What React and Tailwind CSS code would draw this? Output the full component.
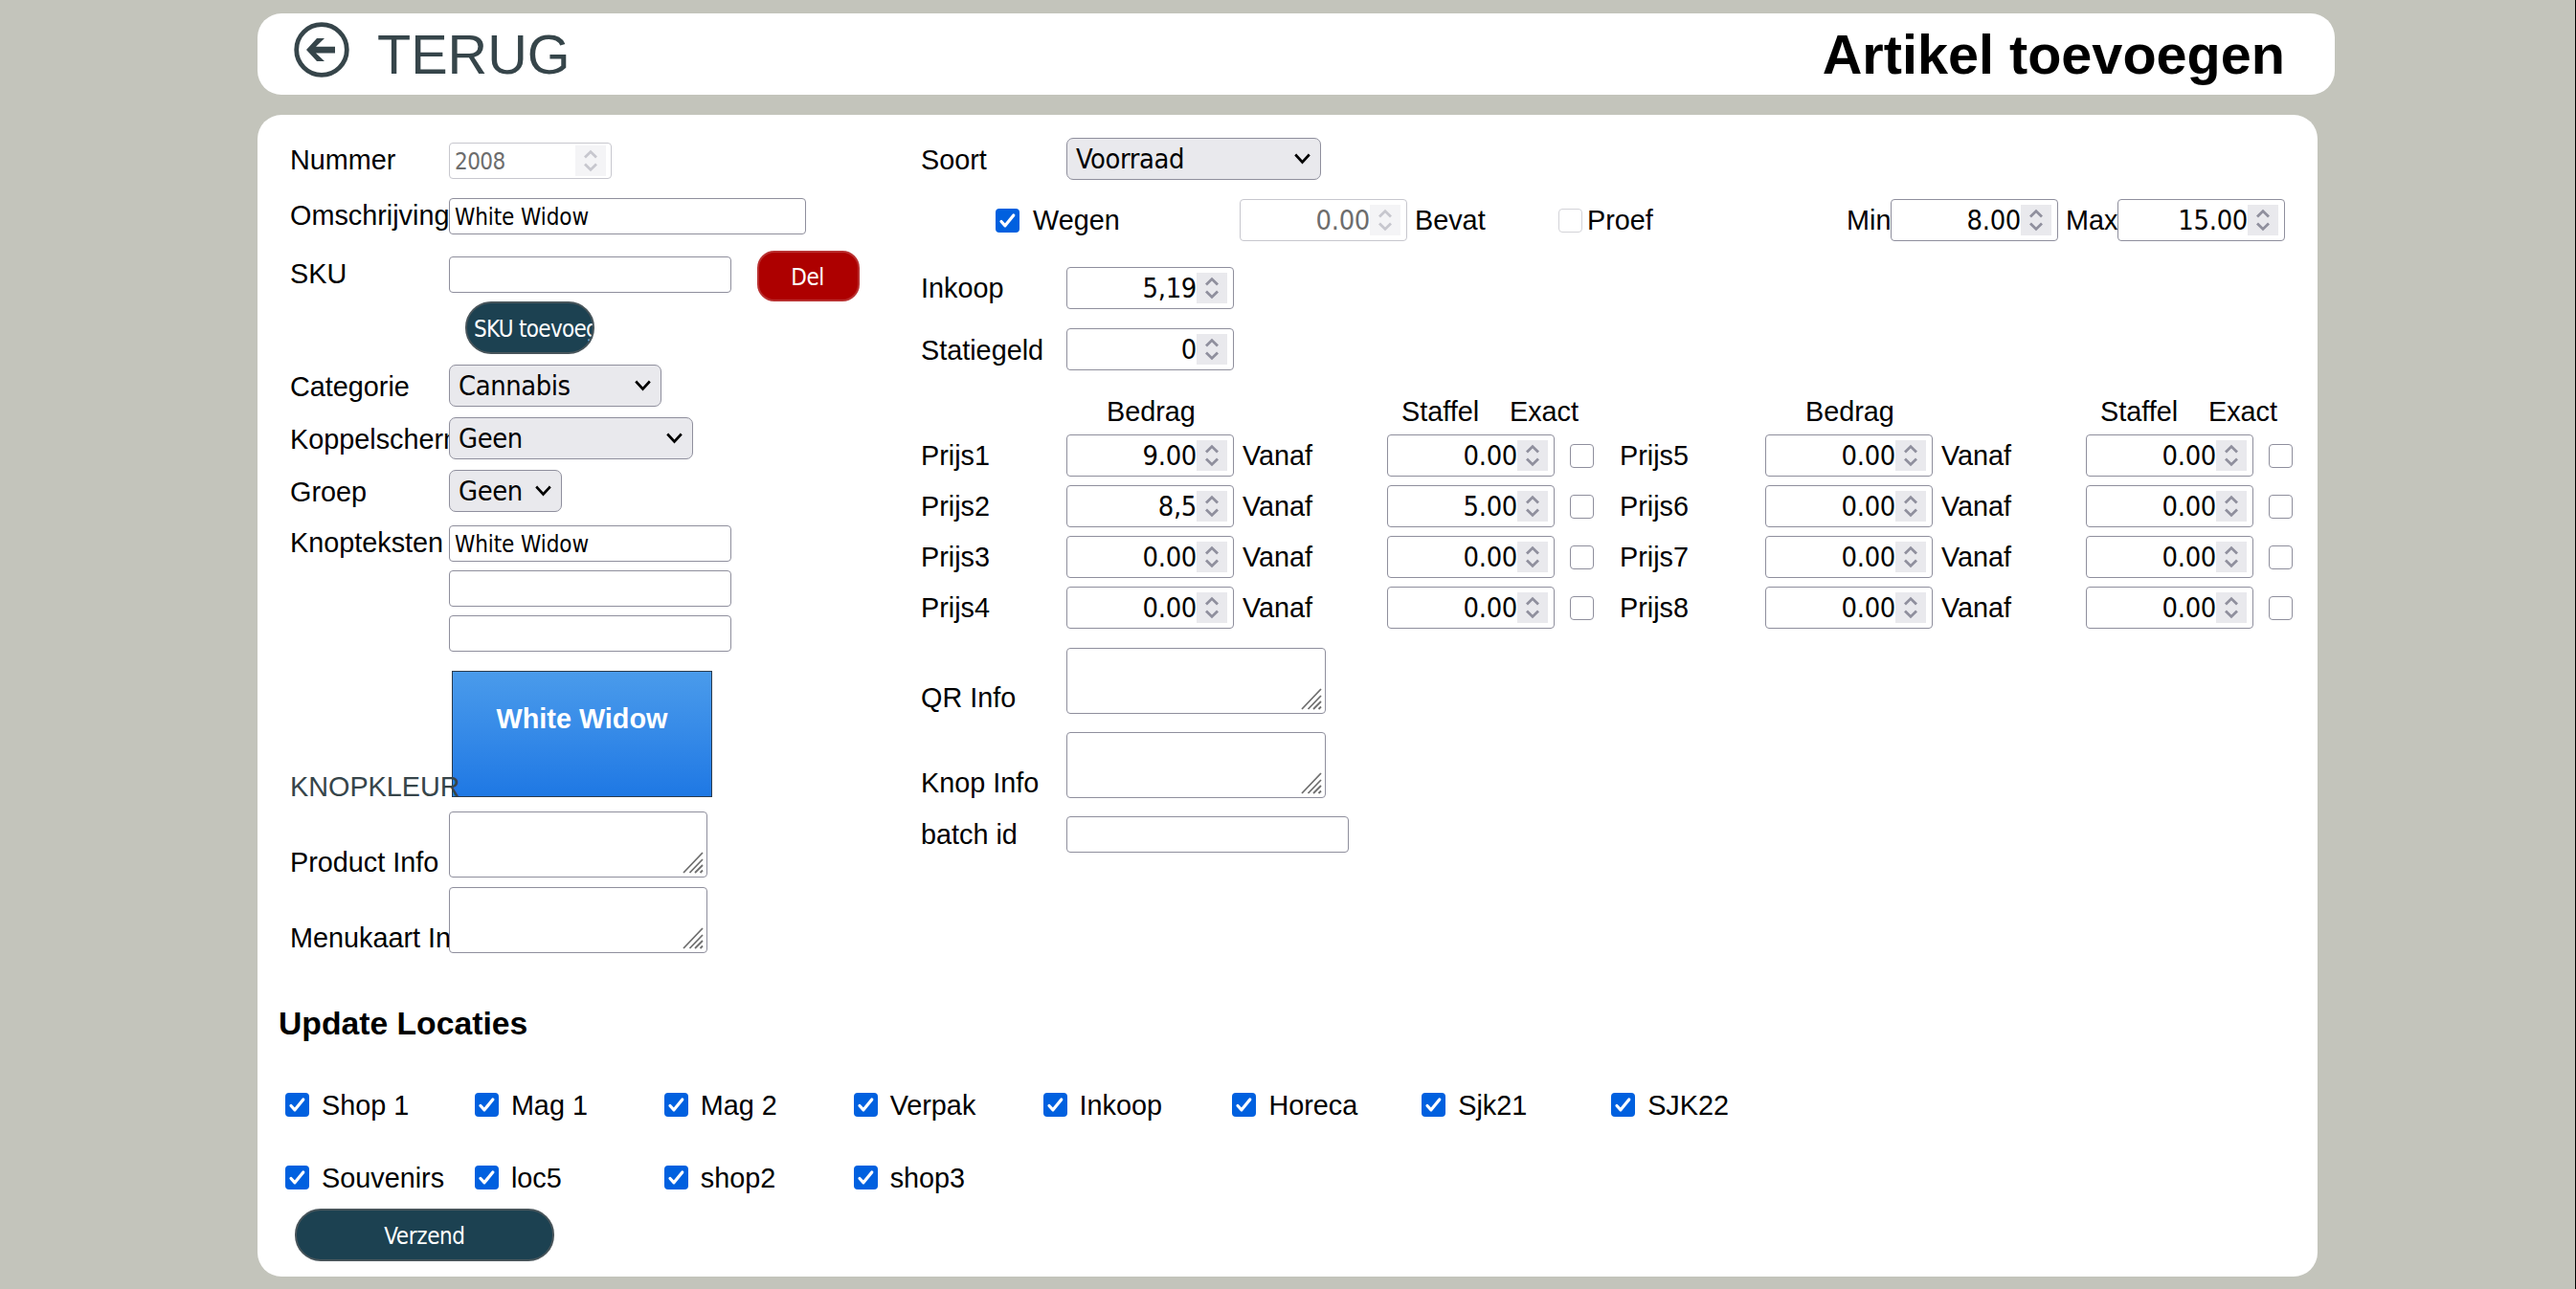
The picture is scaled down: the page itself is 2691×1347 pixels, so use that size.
import { useState } from 'react'

const labelClass = 'shrink-0 whitespace-nowrap'

function Spinner({ disabled }) {
  return (
    <span className={`flex h-8 w-8 shrink-0 items-center justify-center ${disabled ? 'bg-[#f4f4f6]' : 'bg-[#e9e9ed]'}`}>
      <svg width="14" height="24" viewBox="0 0 14 24" fill="none" stroke={disabled ? '#c7c7ce' : '#8f8f9d'} strokeWidth="2.8">
        <path d="M1 8.4 L7 2.6 L13 8.4" />
        <path d="M1 15.6 L7 21.4 L13 15.6" />
      </svg>
    </span>
  )
}

function NumberInput({ value, disabled }) {
  return (
    <div className={`flex h-11 w-[175px] shrink-0 items-center rounded-[4px] border-[1.5px] bg-white pr-[6px] ${disabled ? 'border-[#c7c7ce]' : 'border-[#8f8f9d]'}`}>
      <input
        className={`w-full min-w-0 text-right font-['DejaVu_Sans_Condensed','DejaVu_Sans',sans-serif] text-[28.8px] leading-9 tracking-[-0.3px] outline-none ${disabled ? 'text-[#6d6d6d]' : 'text-black'}`}
        defaultValue={value}
        disabled={disabled}
      />
      <Spinner disabled={disabled} />
    </div>
  )
}

function TextInput({ value = '', width = 'w-[295px]' }) {
  return (
    <input
      className={`h-[38px] shrink-0 rounded-[4px] border-[1.5px] border-[#8f8f9d] bg-white px-[5px] pt-[2px] font-['DejaVu_Sans_Condensed','DejaVu_Sans',sans-serif] text-[24px] tracking-[-0.1px] outline-none ${width}`}
      defaultValue={value}
    />
  )
}

function SelectBox({ value, width }) {
  return (
    <button className={`flex h-11 shrink-0 items-center justify-between rounded-[7px] border-[1.5px] border-[#8f8f9d] bg-[#e9e9ed] pr-[10px] pl-[9px] font-['DejaVu_Sans_Condensed','DejaVu_Sans',sans-serif] text-[28.8px] leading-9 tracking-[-0.4px] ${width}`}>
      <span>{value}</span>
      <svg width="17" height="12" viewBox="0 0 17 12" fill="none" stroke="#000" strokeWidth="2.6">
        <path d="M1.2 1.5 L8.5 9.5 L15.8 1.5" />
      </svg>
    </button>
  )
}

function TextArea({ width }) {
  return (
    <div className={`flex h-[69px] shrink-0 items-end justify-end rounded-[4px] border-[1.5px] border-[#8f8f9d] bg-white pr-[3px] pb-[3px] ${width}`}>
      <svg width="22" height="23" viewBox="0 0 22 23" fill="none" stroke="#6f6f6f" strokeWidth="1.8">
        <path d="M1 22 L21 1 M7.5 22 L21 8 M13 22 L21 14 M18.5 22 L21 19.5" />
      </svg>
    </div>
  )
}

function Checkbox({ defaultChecked = false, disabled }) {
  const [checked, setChecked] = useState(defaultChecked)
  return (
    <button
      className={`flex h-[25px] w-[25px] shrink-0 items-center justify-center rounded-[4px] ${checked ? 'bg-[#0060df]' : disabled ? 'border-[1.5px] border-[#d3d3d8] bg-white' : 'border-[1.5px] border-[#8f8f9d] bg-white'}`}
      onClick={() => !disabled && setChecked(!checked)}
    >
      {checked && (
        <svg width="19" height="19" viewBox="0 0 19 19" fill="none" stroke="#fff" strokeWidth="3.2" strokeLinecap="round" strokeLinejoin="round">
          <path d="M3 10.5 L7 14.8 L15.8 4" />
        </svg>
      )}
    </button>
  )
}

const prices = [
  ['9.00', '0.00'],
  ['8,5', '5.00'],
  ['0.00', '0.00'],
  ['0.00', '0.00'],
  ['0.00', '0.00'],
  ['0.00', '0.00'],
  ['0.00', '0.00'],
  ['0.00', '0.00'],
]

const locations = ['Shop 1', 'Mag 1', 'Mag 2', 'Verpak', 'Inkoop', 'Horeca', 'Sjk21', 'SJK22', 'Souvenirs', 'loc5', 'shop2', 'shop3']

function PriceTable({ start }) {
  return (
    <div className="w-[730px] shrink-0">
      <div className="flex h-9 items-center">
        <span className="ml-[194px] w-[308px]">Bedrag</span>
        <span className="w-[113px]">Staffel</span>
        <span>Exact</span>
      </div>
      <div className="mt-[6px] flex flex-col gap-[9px]">
        {prices.slice(start, start + 4).map(([bedrag, staffel], i) => (
          <div key={i} className="flex h-11 items-center">
            <span className="w-[152px]">Prijs{start + i + 1}</span>
            <NumberInput value={bedrag} />
            <span className="ml-[9px] w-[151px]">Vanaf</span>
            <NumberInput value={staffel} />
            <span className="ml-4 flex">
              <Checkbox />
            </span>
          </div>
        ))}
      </div>
    </div>
  )
}

function LeftColumn() {
  const label = `${labelClass} w-[166px]`
  return (
    <div className="w-[659px] shrink-0">
      <div className="flex h-[38px] items-center">
        <span className={`${label} pb-[2px]`}>Nummer</span>
        <div className="flex h-[38px] w-[170px] items-center rounded-[4px] border-[1.5px] border-[#c7c7ce] bg-white pr-[5px] pl-[5px]">
          <input
            className="w-full min-w-0 font-['DejaVu_Sans_Condensed','DejaVu_Sans',sans-serif] pt-[2px] text-[24px] tracking-[-0.6px] text-[#6d6d6d] outline-none"
            defaultValue="2008"
            disabled
          />
          <Spinner disabled />
        </div>
      </div>
      <div className="mt-5 flex h-[38px] items-center">
        <span className={`${label} pb-[2px]`}>Omschrijving</span>
        <TextInput value="White Widow" width="w-[373px]" />
      </div>
      <div className="mt-[17px] flex h-[53px] items-center">
        <span className={`${label} pb-[5px]`}>SKU</span>
        <span className="flex pb-[3px]">
          <TextInput />
        </span>
        <button className="ml-[27px] h-[53px] w-[107px] rounded-[18px] border-2 border-[#b93030] bg-[#ad0000] pt-[2px] pr-[2px] font-['DejaVu_Sans_Condensed','DejaVu_Sans',sans-serif] text-[24px] tracking-[-0.5px] text-white">
          Del
        </button>
      </div>
      <button className="ml-[183px] flex h-[55px] w-[135px] items-center overflow-hidden rounded-[27px] border-2 border-[#48555b] bg-[#1c4151] pt-[2px] pl-[7px] font-['DejaVu_Sans_Condensed','DejaVu_Sans',sans-serif] text-[24px] tracking-[-0.7px] whitespace-nowrap text-white">
        SKU toevoegen
      </button>
      <div className="mt-[11px] flex h-11 items-center">
        <span className={`${label} pt-[2px]`}>Categorie</span>
        <SelectBox value="Cannabis" width="w-[222px]" />
      </div>
      <div className="mt-[11px] flex h-11 items-center">
        <span className={`${label} overflow-hidden pt-px`}>Koppelscherm</span>
        <SelectBox value="Geen" width="w-[255px]" />
      </div>
      <div className="mt-[11px] flex h-11 items-center">
        <span className={`${label} pt-px`}>Groep</span>
        <SelectBox value="Geen" width="w-[118px]" />
      </div>
      <div className="mt-[14px] flex h-[38px] items-center">
        <span className={`${label} pb-[2px]`}>Knopteksten</span>
        <TextInput value="White Widow" />
      </div>
      <div className="mt-[9px] ml-[166px] flex flex-col gap-[9px]">
        <TextInput />
        <TextInput />
      </div>
      <div className="mt-5 flex h-[132px] items-end">
        <span className={`${label} z-10 -mb-1 w-[169px] leading-none text-[#36454a]`}>KNOPKLEUR</span>
        <div className="flex h-[132px] w-[272px] justify-center border-[1.5px] border-[#2b3b4d] bg-linear-to-b from-[#4a9beb] to-[#1e78e4] pt-[31px] font-bold text-white">
          White Widow
        </div>
      </div>
      <div className="mt-[15px] flex h-[69px] items-end">
        <span className={`${label} -mb-[2px]`}>Product Info</span>
        <TextArea width="w-[270px]" />
      </div>
      <div className="mt-[10px] flex h-[69px] items-end">
        <span className={`${label} -mb-[2px] overflow-hidden`}>Menukaart Info</span>
        <TextArea width="w-[270px]" />
      </div>
    </div>
  )
}

function RightColumn() {
  const label = `${labelClass} w-[152px]`
  return (
    <div className="min-w-0 flex-1">
      <div className="-mt-[5px] flex h-11 items-center">
        <span className={`${label} pt-[2px]`}>Soort</span>
        <SelectBox value="Voorraad" width="w-[266px]" />
      </div>
      <div className="mt-5 flex h-11 items-center pl-[78px]">
        <Checkbox defaultChecked />
        <span className="ml-[14px] w-[216px]">Wegen</span>
        <NumberInput value="0.00" disabled />
        <span className="ml-2 w-[150px]">Bevat</span>
        <Checkbox disabled />
        <span className="ml-[5px] w-[271px]">Proef</span>
        <span className="w-[46px]">Min</span>
        <NumberInput value="8.00" />
        <span className="ml-2 w-[54px]">Max</span>
        <NumberInput value="15.00" />
      </div>
      <div className="mt-[27px] flex h-11 items-center">
        <span className={label}>Inkoop</span>
        <NumberInput value="5,19" />
      </div>
      <div className="mt-5 flex h-11 items-center">
        <span className={`${label} pt-px`}>Statiegeld</span>
        <NumberInput value="0" />
      </div>
      <div className="mt-[25px] flex">
        <PriceTable start={0} />
        <PriceTable start={4} />
      </div>
      <div className="mt-5 flex h-[69px] items-end">
        <span className={`${label} -mb-px`}>QR Info</span>
        <TextArea width="w-[271px]" />
      </div>
      <div className="mt-[19px] flex h-[69px] items-end">
        <span className={`${label} -mb-[2px]`}>Knop Info</span>
        <TextArea width="w-[271px]" />
      </div>
      <div className="mt-[19px] flex h-[38px] items-center">
        <span className={label}>batch id</span>
        <TextInput />
      </div>
    </div>
  )
}

export default function App() {
  return (
    <div className="h-[1347px] w-[2691px] overflow-hidden border-r border-black bg-[#c3c4bb] pt-[14px] pl-[269px] font-['Liberation_Sans',Arial,sans-serif] text-[28.8px] leading-9 text-black">
      <header className="flex h-[85px] w-[2170px] items-center justify-between rounded-[25px] bg-white pr-[52px] pl-[38px]">
        <a className="flex items-center text-[57.6px] leading-[64px] text-[#36454a]">
          <svg className="mb-[9px]" width="58" height="58" viewBox="0 0 58 58" fill="currentColor">
            <circle cx="29" cy="29" r="26.3" fill="none" stroke="currentColor" strokeWidth="4.8" />
            <path d="M13 29 L24 17 H32 L23 25.7 H43 V32.4 H23 L32 41 H24 Z" />
          </svg>
          <span className="ml-[29px]">TERUG</span>
        </a>
        <h1 className="text-[57.6px] leading-[64px] font-bold">Artikel toevoegen</h1>
      </header>

      <main className="mt-[21px] h-[1214px] w-[2152px] rounded-[25px] bg-white pt-[29px] pl-[34px]">
        <div className="flex h-[900px]">
          <LeftColumn />
          <RightColumn />
        </div>

        <h3 className="-ml-[12px] text-[33.7px] leading-10 font-bold">Update Locaties</h3>
        <div className="mt-[47px] -ml-[5px] grid w-[1583px] grid-cols-8 gap-y-10">
          {locations.map((name) => (
            <label key={name} className="flex h-9 items-center">
              <Checkbox defaultChecked />
              <span className="ml-[13px] pt-[2px]">{name}</span>
            </label>
          ))}
        </div>
        <button className="mt-[15px] ml-[5px] h-[55px] w-[271px] rounded-[27px] border-2 border-[#48555b] bg-[#1c4151] pt-[2px] font-['DejaVu_Sans_Condensed','DejaVu_Sans',sans-serif] text-[24px] tracking-[-0.4px] text-white">
          Verzend
        </button>
      </main>
    </div>
  )
}
